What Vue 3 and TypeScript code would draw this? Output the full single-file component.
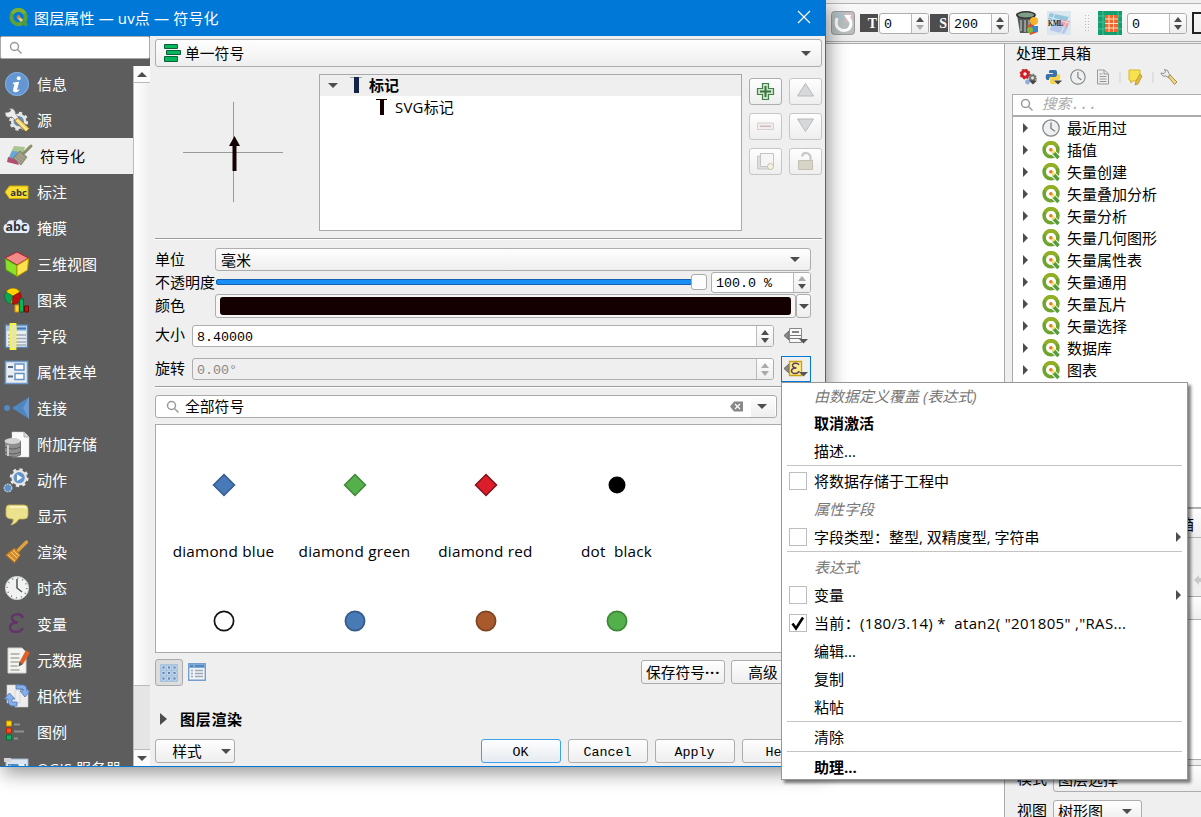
<script setup lang="ts">
interface Row { label: string; icon: string; active?: boolean }
interface MenuItem { label?: string; kind?: string; sep?: boolean; box?: boolean; checked?: boolean; sub?: boolean }

const gear = '<circle cx="13" cy="13" r="7" fill="none" stroke="#e6e6e6" stroke-width="4"/><circle cx="13" cy="13" r="9.5" fill="none" stroke="#e6e6e6" stroke-width="3" stroke-dasharray="3.7 3.76"/>'

const sidebar: Row[] = [
  { label: '信息', icon: '<circle cx="13" cy="12" r="12" fill="#6496d2"/><circle cx="13" cy="12" r="11.5" fill="none" stroke="#85aee0"/><circle cx="14.7" cy="6.2" r="2" fill="#fff"/><path d="M9.5 10.6l5.7-.9-2.1 8.1q0 1 2.5-.7-1 3.2-4.2 3.2-3.100-.2-2.200-3.300l1.300-5-1.900.2z" fill="#fff"/>' },
  { label: '源', icon: '<g transform="translate(3.500 2) scale(.86)">' + gear + '<circle cx="13" cy="13" r="6" fill="#6592c4"/></g><path d="M1 4.500l4-.5 2-1.500L5 1q4-1.500 6 2l.5 3L15 10l-3 3-4-4-4 .5Q1 8.500 1 4.500z" fill="#eee" stroke="#777" stroke-width=".7"/><path d="M14 9.500l11.500 11-3.500 3.500L10.500 13z" fill="#f0cf66" stroke="#6e5520" stroke-width=".8"/><path d="M13 12l10 10" stroke="#fff0a8" stroke-width="1.300"/>' },
  { label: '符号化', active: true, icon: '<path d="M7 2l11 1-4 15L1 15z" fill="#a9c590"/><path d="M5 7l8 1-3 8-8-2z" fill="#67a6d9"/><path d="M1 13l9 3 2 5-12-3z" fill="#b34e72"/><path d="M24 2l-7 7" stroke="#8c8b6c" stroke-width="3" stroke-linecap="round"/><path d="M13 7l7 6-6 8-8-7z" fill="#989680" stroke="#6f6e5b" stroke-width=".6"/><path d="M8 14l6 5m-4-7 6 5m-5-8 6 5" stroke="#bab8a0" stroke-width=".7"/>' },
  { label: '标注', icon: '<path d="M1 12l4.500-6H24v12.500H5.500z" fill="#f9df32" stroke="#d2a800"/><text x="14.500" y="15.500" font-family="Open Sans,sans-serif" font-size="9.500" font-weight="700" text-anchor="middle" fill="#333">abc</text>' },
  { label: '掩膜', icon: '<path d="M2.500 17c-4-1-4-9 0-9 2-5 5-4 10-3 3-3 6-1 6 2 5-1 7 1 7 5s-2 6-5 5z" fill="#e4edfb"/><text x="12.500" y="15.300" font-family="Open Sans,sans-serif" font-size="12.500" font-weight="700" text-anchor="middle" fill="#333">abc</text>' },
  { label: '三维视图', icon: '<path d="M13 0l11.500 6-11.500 7L1 6z" fill="#f28a8a" stroke="#b51f24"/><path d="M1 6.500l12 7v11L2 18z" fill="#8be02b" stroke="#4d970c"/><path d="M24.500 6.500l-11.500 7v11L23.500 18z" fill="#fde24c" stroke="#bc9a00"/>' },
  { label: '图表', icon: '<circle cx="9" cy="8" r="8" fill="#ffd300" stroke="#735e00" stroke-width=".6"/><path d="M9 8L2 4a8 8 0 0 0 4 12z" fill="#06a653" stroke="#045f30" stroke-width=".6"/><path d="M9 8l7-4a8 8 0 0 1-8 12z" fill="#be1010" stroke="#5f0a05" stroke-width=".6"/><path d="M11 17h4v7h-4z" fill="#fdd52b" stroke="#d88b00"/><path d="M15.500 11h4v13h-4z" fill="#06b55c" stroke="#046334"/><path d="M20.500 18h4v6h-4z" fill="#c01414" stroke="#650b07"/>' },
  { label: '字段', icon: '<path d="M1.500 1h22v22.500h-22z" fill="#e9eef4" stroke="#5581b4" stroke-width="1.500"/><path d="M2.500 2h20v5h-20z" fill="#a8c9ea"/><path d="M13 4.500h9" stroke="#4376b4" stroke-width="2"/><path d="M4 11h18M4 14.500h18M4 18h18M4 21h18" stroke="#a0acb8" stroke-width="1.300"/><path d="M6.500 0h5v25h-5z" fill="#dfe5c6" stroke="#fbf13f" stroke-width="1.800"/>' },
  { label: '属性表单', icon: '<path d="M1.500 1.500h22v22h-22z" fill="#e7edf3" stroke="#6d9acb" stroke-width="1.500"/><path d="M11 4h9v6h-9zm0 9.500h9v6h-9z" fill="#fff" stroke="#6391c6" stroke-width="1.400"/><path d="M4 7h5M4 16.500h5" stroke="#5a6a7e" stroke-width="2"/>' },
  { label: '连接', icon: '<path d="M25 1v22L8 12z" fill="#4f86c0"/><path d="M25 1v22l-6-11z" fill="#6d9bcf"/><circle cx="3" cy="12" r="2.900" fill="#5589c3"/>' },
  { label: '附加存储', icon: '<path d="M8 0h12l5 5v20H8z" fill="#fafafa" stroke="#ccc" stroke-width=".5"/><path d="M20 0v5h5" fill="#ddd" stroke="#888" stroke-width=".6"/><path d="M.5 9q8-5 16 0v14q-8 4-16 0z" fill="#8e8e8e" stroke="#555" stroke-width=".7"/><ellipse cx="8.500" cy="9" rx="8" ry="3" fill="#d3d3d3"/><path d="M.5 15q8 4 16 0M.5 20q8 4 16 0" fill="none" stroke="#5d5d5d"/><path d="M4 13v11" stroke="#ccc" stroke-width="2"/>' },
  { label: '动作', icon: '<g transform="translate(4 -1.500) scale(.86)">' + gear + '<circle cx="13" cy="13" r="6.500" fill="#6395cd"/><path d="M10.500 9l6 4-6 4z" fill="#fff"/></g><circle cx="4" cy="20" r="3.800" fill="#5a8fca" stroke="#c3c9cf" stroke-width="1.300" stroke-dasharray="2 .7"/>' },
  { label: '显示', icon: '<path d="M5 1h15q4 0 4 4v6q0 4-4 4h-5q-3 5-8 6 3-4 2-6-7 0-7-4V5q0-4 3-4z" fill="#ece18c" stroke="#c8b650" stroke-width=".8"/><path d="M6 3h13q3 0 3 2" stroke="#fff9cf" stroke-width="1.400" fill="none"/>' },
  { label: '渲染', icon: '<path d="M22.500 2l-9 9" stroke="#e0a13c" stroke-width="3.200" stroke-linecap="round"/><path d="M10.500 8l6 7-6 8-9-8z" fill="#d98d2a" stroke="#a5631b" stroke-width=".7"/><path d="M4 15l7 6m-4-9 6 6m-4-8 6 6" stroke="#f1cf8d" stroke-width="1"/>' },
  { label: '时态', icon: '<circle cx="13" cy="12" r="11.600" fill="#f2f2f0" stroke="#ced1d1"/><circle cx="13" cy="12" r="9.800" fill="none" stroke="#5f7186" stroke-width="1.300" stroke-dasharray="1 4.130"/><path d="M13 3v9l5 4" fill="none" stroke="#4d5459" stroke-width="1.500"/>' },
  { label: '变量', icon: '<path d="M18.500 5C16 .5 7 2 8 6.500q1 3.500 6 4-7-.3-8 4.500c-1 5.500 9.500 7 13 1" fill="none" stroke="#623368" stroke-width="2.400"/><circle cx="18" cy="4.800" r="1.600" fill="#623368"/>' },
  { label: '元数据', icon: '<path d="M4 0h14l4 4v21H4z" fill="#f4f4f2" stroke="#d1d1cd"/><path d="M6.500 6h9M6.500 10h9M6.500 14h9M6.500 18h7M6.500 22h9" stroke="#a9aaa6" stroke-width="1.400"/><path d="M22 2l4 3-7 11-4 2 1-5z" fill="#dd6227"/><path d="M15.500 13.500l-1 5 4-2z" fill="#555"/>' },
  { label: '相依性', icon: '<path d="M3 1h13v18H3zM11 6h13v17H11z" fill="#eee" stroke="#c9c9c9" stroke-width=".6"/><path d="M12 1h8q3 1 3 6h3l-5 6-5-6h3V5h-7zM13 22H8q-4 0-4-7H0l5.500-6 5.500 6H8v3h5z" fill="#86aee9" stroke="#4d77ba" stroke-width=".8"/>' },
  { label: '图例', icon: '<path d="M2.500 1h5v5h-5z" fill="#ffdb0c" stroke="#c98a00"/><path d="M2.500 8h5v5h-5z" fill="#f95218" stroke="#b4240a"/><path d="M2.500 15h5v5h-5z" fill="#0cb661" stroke="#056b35"/><path d="M10 4.500h6M10 11.500h10M10 18.500h4" stroke="#909090" stroke-width="2"/>' },
  { label: 'QGIS 服务器', icon: '<path d="M2 3h22v17H2z" fill="#d9e6f2" stroke="#a7b7c8"/><path d="M0 2h7v4H0z" fill="#d5d5d5"/><path d="M4 8h18v9H4z" fill="#508cc3"/><path d="M5 9l6 3-3 4zm9-1h6l2 5-6-1z" fill="#e9f2ea"/>' },
]

const qIcon = '<circle cx="9" cy="8.800" r="6.900" fill="none" stroke="#6fa42f" stroke-width="3.600"/><path d="M2.900 5.200a7 7 0 0 1 12.200 0" stroke="#93b023" stroke-width="3.400" fill="none"/><path d="M11 11.500l5 4.500" stroke="#fff" stroke-width="5.400"/><path d="M11.500 11.500l5 5.500" stroke="#529d36" stroke-width="3.400"/><path d="M9 6.500l4.500 4.500-2.500 2-4-4z" fill="#f8e27a"/><circle cx="8.800" cy="8.700" r="1.700" fill="#ee7727"/>'
const clock = '<circle cx="9" cy="9" r="8.200" fill="#eef0f0" stroke="#7e8487" stroke-width="1.200"/><path d="M9 3.500v6l4 2.800" fill="none" stroke="#777d80" stroke-width="1.300"/>'

const tree: string[] = ['最近用过', '插值', '矢量创建', '矢量叠加分析', '矢量分析', '矢量几何图形', '矢量属性表', '矢量通用', '矢量瓦片', '矢量选择', '数据库', '图表']

const tools: { icon: string; w: number }[] = [
  { w: 26, icon: '<circle cx="6" cy="5" r="3.200" fill="none" stroke="#cf2027" stroke-width="3"/><circle cx="6" cy="5" r="4.400" fill="none" stroke="#cf2027" stroke-width="2" stroke-dasharray="1.700 1.750"/><circle cx="13.500" cy="9" r="2.400" fill="none" stroke="#727774" stroke-width="2"/><circle cx="13.500" cy="9" r="3.600" fill="none" stroke="#727774" stroke-width="1.600" stroke-dasharray="1.400 1.400"/><circle cx="8.500" cy="13" r="2.400" fill="#8eace1"/><path d="M10 11.500h8l-4 4z" fill="#444"/>' },
  { w: 25, icon: '<path d="M5 1h5q2 0 2 2v4q0 1-1 1H6q-2 0-2 3H2Q0 10 1 6q0-1 2-1h5V4H4V2z" fill="#3973a9"/><path d="M12 5h2q2 1 1 5-1 1-2 1H9v1h4v2q-1 1-5 1-3 0-3-2v-3q0-2 2-2h3q2 0 2-3z" fill="#f7d24b"/><path d="M9 11.500h8l-4 4z" fill="#444"/>' },
  { w: 25, icon: '<g transform="scale(.88)">' + clock + '</g>' },
  { w: 20, icon: '<path d="M2.500 1h7l4 4v10h-11z" fill="#eee" stroke="#999"/><path d="M9 1v4h4M4.500 5h3M4.500 7.500h7M4.500 10h7M4.500 12.500h7" stroke="#969696" fill="none"/>' },
  { w: 12, icon: '<path d="M5 3v11" stroke="#d1d1d1"/>' },
  { w: 21, icon: '<path d="M2 1h11v8l-5 3H5l-1 2-1-3H2z" fill="#f6e34d" stroke="#d9b730"/><path d="M13 5l2 2-4 8-3 1 1-4z" fill="#e9bc36" stroke="#a1864c" stroke-width=".7"/>' },
  { w: 12, icon: '<path d="M5 3v11" stroke="#d1d1d1"/>' },
  { w: 20, icon: '<path d="M1 4l3 .5L5.500 3 4.500.5q4 0 4.500 4L11 7 9 9 6 7Q2 8 1 4z" fill="#eee" stroke="#777" stroke-width=".8"/><path d="M8 7.500l2-1.500 7 7-2.500 2.500z" fill="#f1d777" stroke="#8d7848" stroke-width=".8"/>' },
]

const sideButtons: string[] = [
  '<path d="M6.500 1.500h6v5h5v6h-5v5h-6v-5h-5v-6h5z" fill="#cfe4d0" stroke="#3f8147" stroke-width="1.200"/><path d="M9.500 4v11M4 9.500h11" stroke="#39753b" stroke-width="2"/>',
  '<path d="M9.500 1.500l8 12.500h-16z" fill="#d5d9db" stroke="#b7babc"/>',
  '<path d="M1.500 6h16v6.500h-16z" fill="#f2eded" stroke="#dccfcf"/><path d="M4 9.300h11" stroke="#cdbbbb" stroke-width="1.500"/>',
  '<path d="M9.500 14.500l8-12.500h-16z" fill="#d5d9db" stroke="#b7babc"/>',
  '<path d="M1.500 4h14v13h-14z" fill="#ddd" stroke="#c9c9c9"/><path d="M4.500 1.500h13v13h-13z" fill="#f5f5f5" stroke="#c4c4c4"/><circle cx="14.500" cy="14.500" r="3" fill="#f4f2e4" stroke="#c8c2a2"/>',
  '<path d="M6 4.500Q7 .5 10.500 1q5 1 4 7.500" fill="none" stroke="#c7c7c7" stroke-width="2.200"/><path d="M2.500 8.500h14v9h-14z" fill="#d7d4c8" stroke="#c3bfae"/>',
]

const symbols: { name: string; shape: string; fill: string; line: string }[] = [
  { name: 'diamond blue', shape: 'd', fill: '#4778b8', line: '#345b8c' },
  { name: 'diamond green', shape: 'd', fill: '#54b04a', line: '#3f8738' },
  { name: 'diamond red', shape: 'd', fill: '#db1e2a', line: '#801119' },
  { name: 'dot  black', shape: 'b', fill: '#000', line: '#000' },
  { name: '', shape: 'c', fill: '#fff', line: '#111' },
  { name: '', shape: 'c', fill: '#487bb6', line: '#355a87' },
  { name: '', shape: 'c', fill: '#a95a2d', line: '#7f4422' },
  { name: '', shape: 'c', fill: '#54b04a', line: '#3f8738' },
]

const menu: MenuItem[] = [
  { label: '由数据定义覆盖 (表达式)', kind: 'head' },
  { label: '取消激活', kind: 'bold' },
  { label: '描述...' },
  { sep: true },
  { label: '将数据存储于工程中', box: true },
  { label: '属性字段', kind: 'head' },
  { label: '字段类型：整型, 双精度型, 字符串', box: true, sub: true },
  { sep: true },
  { label: '表达式', kind: 'head' },
  { label: '变量', box: true, sub: true },
  { label: '当前：(180/3.14) *  atan2( "201805" ,"RAS...', kind: 'expr', box: true, checked: true },
  { label: '编辑...' },
  { label: '复制' },
  { label: '粘帖' },
  { sep: true },
  { label: '清除' },
  { sep: true },
  { label: '助理...', kind: 'bold' },
]
</script>

<template>
  <div class="screen">
    <div class="main">
      <div class="toolbar">
        <svg class="reset" width="24" height="24"><rect x=".5" y=".5" width="23" height="23" rx="3" fill="#b9bebe" stroke="#999" /><path d="M5 2h8v7H5z" fill="#aec2c9" /><path d="M14 2h8v9h-8z" fill="#d6bdbd" /><path d="M6 7q-3 9 4 12 9 2 10-6 0-4-3-6" fill="none" stroke="#fff" stroke-width="3" /><path d="M13 4l7 0-2 7z" fill="#fff" /></svg>
        <span class="tag t1">T</span>
        <span class="spin s1"><b>0</b><i class="ud dim" /></span>
        <span class="tag t2">S</span>
        <span class="spin s2"><b>200</b><i class="ud" /></span>
        <svg class="bin" width="24" height="24"><path d="M2 4h18l-2 18H5z" fill="#555b58" /><ellipse cx="11" cy="4" rx="10" ry="4" fill="#333" /><ellipse cx="11" cy="4" rx="8" ry="2.500" fill="#7f9d89" /><path d="M6 9v11M10 9v12M14 9v9" stroke="#a9aeac" stroke-width="1.500" /><path d="M12 14l6-1 5 8-8 3z" fill="#d9502a" /><circle cx="19" cy="10" r="4" fill="#f7b32a" /><path d="M17 15h6v6h-6z" fill="#3c83c7" /><circle cx="15" cy="19" r="3" fill="#86b33b" /></svg>
        <svg class="kml" width="24" height="24"><rect width="24" height="24" fill="#dce7ed" /><path d="M3 2l19 4-3 7-18-5z" fill="#93c6df" /><path d="M12 8l11 2-3 7-12-4z" fill="#e99da5" /><path d="M6 13l15 4-4 6-15-4z" fill="#b7c7ea" /><path d="M8 2l-6 17M22 7l-9 16M2 6l20 6" stroke="#ecf5f5" stroke-width=".8" /><text x="1" y="15" font-family="Liberation Serif, serif" font-weight="700" font-size="9" textLength="15" lengthAdjust="spacingAndGlyphs" fill="#222">KML</text></svg>
        <i class="grip" />
        <svg class="ras" width="24" height="24"><rect width="24" height="24" fill="#129f70" /><path d="M0 5h24M0 11h24M0 18h24M5 0v24M20 0v24" stroke="#54bd93" /><rect x="7" y="4" width="13" height="17" fill="#f5642c" /><path d="M7 8h13M7 12.500h13M7 17h13M11 4v17M15.500 4v17" stroke="#ffe0bd" /></svg>
        <span class="spin s3"><b>0</b><i class="ud" /></span>
        <i class="edge" />
      </div>
      <div class="work">
        <div class="canvas" />
        <div class="dock">
          <div class="dock-title">处理工具箱</div>
          <div class="dock-tools">
            <svg v-for="(t, i) in tools" :key="i" :width="t.w" height="18" v-html="t.icon" />
          </div>
          <div class="dock-search">
            <svg width="14" height="14"><circle cx="5.500" cy="5.500" r="4" /><path d="M8.500 8.500l4 4" /></svg>
            <em>搜索...</em>
          </div>
          <div class="tree">
            <div v-for="(t, i) in tree" :key="t" class="tree-row">
              <i class="right" /><svg width="19" height="19" v-html="i ? qIcon : clock" /><span>{{ t }}</span>
            </div>
          </div>
          <div class="dock-head">结果箱</div>
          <div class="dock-gap"><svg width="16" height="12"><path d="M0 6l5-5v3h8v4H5v3z" fill="#c9c9c9" /></svg></div>
          <div class="dock-combo" />
          <div class="dock-white" />
          <div class="field mode"><label>模式</label><span class="combo">图层选择</span></div>
          <div class="field view"><label>视图</label><span class="combo">树形图<i class="down" /></span></div>
        </div>
      </div>
    </div>

    <div class="dialog">
      <header>
        <svg class="logo" width="20" height="20"><circle cx="9.500" cy="9" r="7.200" fill="none" stroke="#5c9f3c" stroke-width="4" /><path d="M3.300 5.400a7.200 7.200 0 0 1 12.400 0" fill="none" stroke="#7eae36" stroke-width="3.600" /><path d="M12 11.500l6 6" stroke="#4d9a3f" stroke-width="3.600" /><path d="M9 7l5 5-2 2-4-4z" fill="#e4cf7d" /><circle cx="9.500" cy="9" r="1.800" fill="#ee7727" /></svg>
        <span>图层属性 — uv点 — 符号化</span>
        <svg class="close" width="14" height="14"><path d="M1 1l12 12M13 1L1 13" stroke="#fff" stroke-width="1.200" /></svg>
      </header>
      <div class="dialog-body">
        <aside>
          <div class="side-search"><svg width="14" height="14"><circle cx="5.500" cy="5.500" r="4" /><path d="M8.500 8.500l4 4" /></svg></div>
          <div class="side-main">
            <nav>
              <div v-for="s in sidebar" :key="s.label" class="nav-row" :class="{ active: s.active }">
                <svg width="26" height="24" v-html="s.icon" /><span>{{ s.label }}</span>
              </div>
            </nav>
            <div class="scroll"><div class="sb"><i class="up" /></div><div class="thumb" /><div class="rest" /><div class="sb last"><i class="down" /></div></div>
          </div>
        </aside>

        <section>
          <div class="combo type">
            <svg width="18" height="20"><g fill="#05b85c" stroke="#086038"><path d="M1.500 1.500h13v4h-13zM3.500 7.500h14v4h-14zM1.500 13.500h13v5h-13z" /></g></svg>
            <span>单一符号</span><i class="down" />
          </div>
          <div class="top">
            <div class="preview">
              <svg width="100" height="100"><path d="M50.500 0v100M0 50.500h100" stroke="#999" /><path d="M51.500 34l5.500 10h-3.500v25h-4V44H46z" fill="#140303" /></svg>
            </div>
            <div class="layers">
              <div class="layer root"><i class="down" /><svg width="12" height="17"><path d="M0 .5h12" stroke="#9aa" /><path d="M4 0h5v16H4z" fill="#142444" /></svg><b>标记</b></div>
              <div class="layer child"><svg width="12" height="17"><path d="M0 .5h11" stroke="#140000" /><path d="M4 0h4v16H4z" fill="#140000" /></svg>SVG标记</div>
            </div>
            <div class="grid-buttons">
              <button v-for="(b, i) in sideButtons" :key="i" :class="{ off: i }"><svg width="19" height="19" v-html="b" /></button>
            </div>
          </div>
          <hr />
          <div class="row unit"><label>单位</label><span class="combo">毫米<i class="down" /></span></div>
          <div class="row opacity"><label>不透明度</label><span class="slider"><i class="track" /><i class="knob" /></span><span class="spin"><b>100.0 %</b><i class="ud updim" /></span></div>
          <div class="row color"><label>颜色</label><span class="swatch"><i /></span><span class="drop"><i class="down" /></span></div>
          <div class="row size"><label>大小</label><span class="spin"><b>8.40000</b><i class="ud" /></span>
            <span class="override"><svg width="26" height="18"><path d="M6 4v9L1 8.500z" fill="#888" stroke="#666" /><path d="M6.500 1.500h12v14h-12z" fill="#f8f8f8" stroke="#888" /><path d="M9 5h7" stroke="#666" stroke-width="1.600" /><path d="M7 8.500h11M7 11.500h11" stroke="#777" /><path d="M16 12h9l-4.500 4.500z" fill="#555" /></svg></span>
          </div>
          <div class="row angle"><label>旋转</label><span class="spin disabled"><b>0.00°</b><i class="ud alldim" /></span>
            <span class="override on"><svg width="26" height="18"><path d="M6 4v9L1 8.500z" fill="#888" stroke="#666" /><path d="M6.500 1.500h12v14h-12z" fill="#fdec8c" stroke="#c9a213" stroke-width="1.300" /><path d="M16 5c-1.500-3-7-2-6.500.7.5 2.300 4 2.300 4 2.300s-5 0-5 3c.5 3.500 6.500 3.200 7.700 0" fill="none" stroke="#59415f" stroke-width="1.500" /><path d="M16 12h9l-4.500 4.500z" fill="#555" /></svg></span>
          </div>
          <hr class="hr2" />
          <div class="filter">
            <svg class="mag" width="14" height="14"><circle cx="5.500" cy="5.500" r="4" /><path d="M8.500 8.500l4 4" /></svg>
            <span>全部符号</span>
            <svg class="clear" width="13" height="11"><path d="M4 .5h9v10H4L0 5.500z" fill="#888" /><path d="M5 3l5 5m0-5-5 5" stroke="#fff" stroke-width="1.200" /></svg>
            <span class="filter-drop"><i class="down" /></span>
          </div>
          <div class="symbols">
            <div v-for="(s, i) in symbols" :key="i" class="symbol">
              <svg width="24" height="24">
                <path v-if="s.shape === 'd'" d="M12 1.500L22.500 12 12 22.500 1.500 12z" :fill="s.fill" :stroke="s.line" stroke-width="1.500" />
                <circle v-else cx="12" cy="12" :r="s.shape === 'b' ? 8.5 : 9.600" :fill="s.fill" :stroke="s.line" :stroke-width="s.shape === 'b' ? 0 : 1.700" />
              </svg>
              <span>{{ s.name }}</span>
            </div>
          </div>
          <div class="views">
            <span class="view-btn"><svg width="18" height="18"><rect width="18" height="18" rx="1" fill="#a8c3df" /><path d="M2 2h3v3H2zm5.500 0h3v3h-3zM13 2h3v3h-3zM2 7.500h3v3H2zm5.500 0h3v3h-3zm5.500 0h3v3h-3zM2 13h3v3H2zm5.500 0h3v3h-3zm5.500 0h3v3h-3z" fill="#5f86b5" stroke="#dce9f5" stroke-width=".7" /></svg></span>
            <svg class="list-ico" width="18" height="18"><path d="M.7.700h16.600v16.600H.7z" fill="#eef3f7" stroke="#75a0cd" stroke-width="1.400" /><path d="M1 1h16v4H1z" fill="#7eadd9" /><path d="M2 3h3m2 0h9" stroke="#487cb5" stroke-width="1.500" /><path d="M3 7.500h2m2 0h8M3 10.500h2m2 0h8M3 13.500h2m2 0h8" stroke="#9fa9b3" stroke-width="1.300" /></svg>
            <button class="save">保存符号<b>···</b></button>
            <button class="adv">高级</button>
          </div>
          <div class="group"><i class="right" />图层渲染</div>
          <footer>
            <button class="style">样式<i class="down" /></button>
            <button class="ok">OK</button><button>Cancel</button><button>Apply</button><button>Help</button>
          </footer>
        </section>
      </div>
    </div>

    <div class="menu">
      <template v-for="(m, i) in menu" :key="i">
        <div v-if="m.sep" class="sep" />
        <div v-else class="item" :class="m.kind">
          <span class="check"><span v-if="m.box" class="box"><svg v-if="m.checked" width="16" height="16"><path d="M2.500 8.500l3.500 5L13 2.500" fill="none" stroke="#000" stroke-width="2.600" /></svg></span></span>
          <span class="text">{{ m.label }}</span>
          <i v-if="m.sub" class="right" />
        </div>
      </template>
    </div>
  </div>
</template>

<style>
body { margin: 0; overflow: hidden; }
</style>

<style scoped>
* { box-sizing: border-box; }
.screen { position: relative; width: 1201px; height: 817px; overflow: hidden; background: #efefef; color: #000; font: 15px/20px "Open Sans", "Noto Sans CJK SC", sans-serif; white-space: pre; }
svg { display: block; flex: none; overflow: visible; }
i { flex: none; }
label { flex: none; }
b { font-weight: 400; }
.down, .up, .right { display: block; width: 0; height: 0; border: 5px solid transparent; }
.down { border-top-color: #4d4d4d; border-bottom: 0; }
.up { border-bottom-color: #4d4d4d; border-top: 0; }
.right { border-left-color: #4d4d4d; border-right: 0; }
.combo, button, .drop { display: flex; align-items: center; border: 1px solid #adadad; border-radius: 3px; background: linear-gradient(#fefefe, #eee); }
.combo .down { margin-left: auto; }
button { justify-content: center; padding: 0; color: #000; font: 13.333px/20px "Liberation Mono", "Noto Sans CJK SC", monospace; }
.spin { display: flex; flex: none; height: 22px; border: 1px solid #adadad; border-radius: 3px; background: #fff; font: 13.333px/20px "Liberation Mono", monospace; overflow: hidden; }
.spin b { flex: 1; padding-left: 4px; line-height: 23px; }
.ud { display: flex; flex-direction: column; justify-content: center; align-items: center; gap: 3px; width: 17px; border-left: 1px solid #bbb; background: linear-gradient(#fdfdfd, #eee); }
.ud::before, .ud::after { content: ""; border: 4.500px solid transparent; }
.ud::before { border-top: 0; border-bottom: 5px solid #4d4d4d; }
.ud::after { border-bottom: 0; border-top: 5px solid #4d4d4d; }
.dim::after, .alldim::after { border-top-color: #aaa; }
.updim::before, .alldim::before { border-bottom-color: #aaa; }

.main { display: flex; flex-direction: column; height: 817px; }
.toolbar { display: flex; flex: none; align-items: flex-start; height: 42px; padding: 10px 0 0 831px; border-bottom: 1px solid #aaa; background: linear-gradient(#efefef 3px, #b4b4b4 3px, #b4b4b4 4px, #f9f9f9 4px, #ededed); }
.toolbar > * { flex: none; }
.reset { margin-top: 1px; }
.tag { display: block; height: 18px; margin-top: 4px; background: #4d4d4d; color: #fff; text-align: right; font: 700 14px/19px "Liberation Serif", serif; }
.t1 { width: 18px; margin-left: 5px; padding-right: 1px; }
.t2 { width: 18px; margin-left: 1px; padding-right: 1px; }
.toolbar .spin { height: 21px; margin-top: 3px; }
.toolbar .spin b { line-height: 22px; }
.s1 { width: 50px; margin-left: 1px; }
.s2 { width: 60px; margin-left: 1px; }
.s3 { width: 60px; margin-left: 5px; }
.bin { margin: 1px 0 0 6px; }
.kml { margin: 1px 0 0 8px; }
.grip { width: 5px; height: 18px; margin: 4px 9px 0 13px; background: radial-gradient(circle, #bbb 0.8px, transparent 1px) 0 0 / 3px 3px; }
.ras { margin-top: 1px; }
.edge { width: 20px; height: 22px; margin: 2px 0 0 5px; border: 2px solid #222; }
.work { display: flex; flex: 1; min-height: 0; margin-top: 1px; border-top: 1px solid #aaa; }
.canvas { flex: none; width: 1005px; border-right: 1px solid #aaa; background: #fff; }
.dock { display: flex; flex: 1; flex-direction: column; min-width: 0; padding-left: 7px; overflow: hidden; }
.dock > * { flex: none; }
.dock-title { height: 22px; padding-left: 4px; line-height: 18px; }
.dock-tools { display: flex; height: 28px; padding: 3px 0 0 7px; }
.dock-search { display: flex; align-items: center; height: 22px; padding-left: 7px; border: 1px solid #adadad; border-right: 0; background: #fff; color: #aaa; gap: 8px; }
.dock-search em { font: italic 14.500px/20px "Liberation Mono", "Noto Sans CJK SC", monospace; }
.dock-search svg, .side-search svg, .mag { fill: none; stroke: #999; stroke-width: 1.500; }
.tree { height: 392px; border: 1px solid #aaa; border-right: 0; background: #fff; }
.tree-row { display: flex; align-items: center; height: 22px; padding-left: 10px; }
.tree-row svg { margin: 0 6px 0 14px; }
.dock-head { height: 30px; padding: 5px 0 0 136px; border: 1px solid #b5b5b5; border-right: 0; background: linear-gradient(#fdfdfd, #eee); overflow: hidden; }
.dock-gap { display: flex; align-items: center; height: 58px; padding: 26px 0 0 182px; }
.dock-combo { height: 24px; border: 1px solid #adadad; border-right: 0; background: linear-gradient(#fefefe, #eee); }
.dock-white { height: 140px; border-bottom: 1px solid #aaa; background: #fff; }
.field { display: flex; padding-left: 5px; }
.field label { width: 36px; line-height: 26px; }
.field .combo { padding-left: 4px; }
.mode { height: 27px; margin-top: 5px; }
.mode .combo { flex: 1; margin-right: -4px; }
.view { height: 27px; margin-top: 8px; margin-bottom: -20px; }
.view label { line-height: 21px; }
.view .combo { width: 89px; height: 22px; padding-right: 9px; }

.dialog { position: absolute; left: 0; top: 0; display: flex; flex-direction: column; width: 826px; height: 767px; border-right: 1px solid #0078d7; border-bottom: 1px solid #0078d7; background: #efefef; box-shadow: 3px 6px 18px rgba(0, 0, 0, .42); }
header { display: flex; flex: none; align-items: center; height: 36px; padding: 0 14px 0 9px; background: #0078d7; color: #fff; }
header span { flex: 1; padding-left: 5px; line-height: 34px; letter-spacing: .15px; }
.close { margin: -2px 0 0; }
.dialog-body { display: flex; flex: 1; min-height: 0; }
aside { display: flex; flex-direction: column; flex: none; width: 150px; background: #5d5d5d; }
.side-search { flex: none; height: 23px; padding: 4px 0 0 8px; border: 1px solid #aaa; background: #fff; border-radius: 2px; }
.side-main { display: flex; flex: 1; min-height: 0; padding-top: 7px; }
nav { width: 133px; overflow: hidden; color: #fff; }
.nav-row { display: flex; align-items: center; height: 36px; padding-left: 4px; gap: 7px; }
.active { background: #efefef; color: #000; padding-left: 7px; }
.scroll { display: flex; flex: 1; flex-direction: column; border-left: 1px solid #bbb; background: #e5e5e5; }
.sb { display: flex; align-items: center; justify-content: center; flex: none; height: 17px; border-bottom: 1px solid #bbb; background: #fcfcfc; }
.last { border: 0; border-top: 1px solid #bbb; }
.thumb { flex: none; height: 603px; border-bottom: 1px solid #bbb; background: linear-gradient(90deg, #fff, #eee); }
.rest { flex: 1; }

section { display: flex; flex: 1; flex-direction: column; min-width: 0; padding: 3px 3px 0 5px; }
.type { flex: none; height: 28px; padding: 0 10px 0 7px; font-size: 14.800px; }
.type span { padding-left: 4px; line-height: 26px; }
.top { display: flex; flex: none; height: 157px; margin-top: 7px; }
.preview { width: 164px; padding: 28px 0 0 28px; }
.layers { width: 423px; border: 1px solid #aaa; background: #fff; }
.layer { display: flex; align-items: center; height: 22px; }
.layer b { font-weight: 700; line-height: 18px; padding-bottom: 2px; }
.root { height: 21px; padding-left: 8px; background: #efefef; }
.root svg { margin: 0 7px 0 12px; }
.child { padding-left: 56px; letter-spacing: .2px; }
.child svg { margin-right: 7px; }
.grid-buttons { display: grid; grid-template-columns: 33px 33px; grid-auto-rows: 27px; gap: 8px 7px; align-content: start; padding: 4px 0 0 7px; }
.off { border-color: #c6c6c6; }
hr { flex: none; width: 100%; height: 2px; margin: 7px 0 0; border: 0; border-top: 1px solid #9c9c9c; background: #fff; }
.row { display: flex; flex: none; align-items: center; margin-right: 11px; }
.row label { width: 60px; padding-bottom: 2px; }
.row .combo { flex: 1; height: 23px; padding: 0 10px 0 5px; line-height: 20px; }
.unit { height: 23px; margin-top: 8px; }
.opacity { height: 21px; margin-top: 1px; }
.opacity .spin { width: 100px; height: 21px; }
.opacity .spin b { line-height: 21px; }
.slider { display: flex; align-items: center; flex: 1; height: 18px; margin: -2px 4px 0 1px; }
.track { flex: 1; height: 6px; border: 1px solid #165fae; border-radius: 2px; background: #1990f5; }
.knob { width: 16px; height: 16px; margin-left: -1px; border: 1px solid #aaa; border-radius: 3px; background: #fdfdfd; }
.color { height: 24px; margin-top: 1px; }
.swatch { flex: 1; height: 24px; padding: 2px 4px; border: 1px solid #adadad; border-radius: 3px; background: #f7f7f7; }
.swatch i { display: block; height: 18px; border-radius: 3px; background: #140000; }
.drop { justify-content: center; width: 15px; height: 24px; }
.size { height: 22px; margin-top: 7px; }
.angle { height: 22px; margin-top: 11px; }
.size label, .angle label { width: 37px; }
.size label { padding-bottom: 5px; }
.size .spin, .angle .spin { width: 582px; }
.disabled { background: #efefef; color: #888; }
.override { display: flex; align-items: center; width: 30px; height: 26px; margin: 0 0 0 7px; padding-left: 1px; border: 1px solid transparent; }
.on { border-color: #0078d7; }
.hr2 { margin-top: 6px; }
.filter { display: flex; flex: none; align-items: center; width: 622px; height: 23px; margin-top: 7px; padding-left: 10px; border: 1px solid #aaa; border-radius: 3px; background: #fff; }
.filter span:first-of-type { flex: 1; padding: 0 0 2px 5px; font-size: 14.800px; }
.filter-drop { display: flex; align-items: center; justify-content: center; width: 24px; height: 20px; margin: 0 1px 0 8px; padding-right: 3px; background: linear-gradient(#fdfdfd, #eee); }
.symbols { display: grid; flex: none; grid-template-columns: repeat(4, 131px); grid-auto-rows: 136px; height: 229px; margin-top: 6px; padding: 48px 0 0 2px; border: 1px solid #aaa; background: #fff; overflow: hidden; }
.symbol { display: flex; flex-direction: column; align-items: center; }
.symbol span { margin-top: 44px; font-size: 15.300px; letter-spacing: .22px; }
.views { display: flex; flex: none; height: 27px; margin-top: 6px; }
.view-btn { padding: 4px; width: 28px; height: 27px; border: 1px solid #aaa; border-radius: 3px; background: #ddd; }
.list-ico { margin: 4px 0 0 5px; }
.views .save { width: 84px; height: 24px; margin: 1px 6px 0 auto; flex: none; }
.save b { width: 15px; text-align: center; letter-spacing: 1px; font-family: "Open Sans", sans-serif; font-weight: 700; }
.views .adv { width: 84px; height: 24px; margin: 1px 7px 0 0; padding-right: 20px; flex: none; }
.save, .adv, .style { font: 14.700px/20px "Noto Sans CJK SC", sans-serif; }
.group { display: flex; align-items: center; flex: none; height: 26px; margin-top: 20px; padding-left: 5px; font-weight: 700; letter-spacing: .7px; line-height: 24px; }
.group .right { margin-right: 13px; border-width: 6px 0 6px 7px; }
footer { display: flex; flex: none; height: 24px; margin-top: 7px; gap: 7px; }
footer button { flex: none; width: 80px; height: 24px; padding: 3px 1px 0 0; }
footer .style { gap: 19px; margin-right: 239px; padding: 0 0 0 13px; }
.ok { border-color: #3ba1ef; background: linear-gradient(#fefefe, #e6ebf1); }

.menu { position: absolute; left: 781px; top: 382px; width: 407px; height: 398px; border: 1px solid #979797; background: #fff; box-shadow: 3px 3px 3px rgba(0, 0, 0, .5); }
.item { display: flex; align-items: center; height: 28px; }
.item:first-child { height: 27px; }
.check { width: 32px; padding: 0 0 2px 7px; }
.box { display: block; width: 18px; height: 18px; border: 1px solid #bdbdbd; }
.text { flex: 1; padding-bottom: 2px; }
.item .right { margin: 0 6px 2px 0; }
.head { color: #777; font-style: italic; }
.bold { font-weight: 700; }
.expr { letter-spacing: .33px; }
.sep { height: 1px; margin: -1px 5px 2px; background: #c3c3c3; }
</style>
